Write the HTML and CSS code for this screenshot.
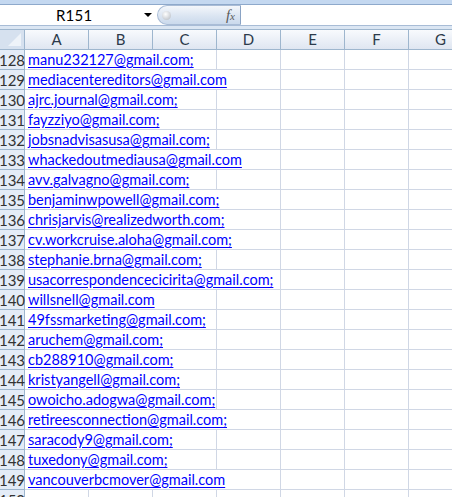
FILE: index.html
```html
<!DOCTYPE html>
<html>
<head>
<meta charset="utf-8">
<link rel="stylesheet" href="styles.css">
</head>
<body>
<div class="app">
  <div class="ribbon-edge"></div>
  <div class="formula-bar">
    <div class="name-box">
      <span class="name-text">R151</span>
      <span class="name-arrow"></span>
    </div>
    <div class="fx-box">
      <span class="knob"></span>
      <span class="fx">f<span class="fx-x">x</span></span>
    </div>
    <div class="formula-input"></div>
  </div>
  <div class="strip"></div>
  <div class="sheet">
    <div class="corner"><span class="corner-tri"></span></div>
    <div class="col-head">A</div>
    <div class="col-head">B</div>
    <div class="col-head">C</div>
    <div class="col-head">D</div>
    <div class="col-head">E</div>
    <div class="col-head">F</div>
    <div class="col-head">G</div>
  </div>
  <div class="rows" id="rows"></div>
</div>
<script>
const data = [
  [128,"manu232127@gmail.com;",3],
  [129,"mediacentereditors@gmail.com",4],
  [130,"ajrc.journal@gmail.com;",3],
  [131,"fayzziyo@gmail.com;",3],
  [132,"jobsnadvisasusa@gmail.com;",3],
  [133,"whackedoutmediausa@gmail.com",4],
  [134,"avv.galvagno@gmail.com;",3],
  [135,"benjaminwpowell@gmail.com;",4],
  [136,"chrisjarvis@realizedworth.com;",4],
  [137,"cv.workcruise.aloha@gmail.com;",4],
  [138,"stephanie.brna@gmail.com;",3],
  [139,"usacorrespondencecicirita@gmail.com;",4],
  [140,"willsnell@gmail.com",3],
  [141,"49fssmarketing@gmail.com;",3],
  [142,"aruchem@gmail.com;",3],
  [143,"cb288910@gmail.com;",3],
  [144,"kristyangell@gmail.com;",3],
  [145,"owoicho.adogwa@gmail.com;",3],
  [146,"retireesconnection@gmail.com;",4],
  [147,"saracody9@gmail.com;",3],
  [148,"tuxedony@gmail.com;",3],
  [149,"vancouverbcmover@gmail.com",4],
  [150,"",1]
];
const rows = document.getElementById('rows');
for (const [n, email, span] of data) {
  const row = document.createElement('div');
  row.className = 'sheet row';
  let html = '<div class="row-head">' + n + '</div>';
  if (email) {
    html += '<div class="cell link-cell span' + span + '"><span class="link">' + email + '</span></div>';
  } else {
    html += '<div class="cell"></div>';
  }
  for (let i = span; i < 7; i++) html += '<div class="cell"></div>';
  row.innerHTML = html;
  rows.appendChild(row);
}
</script>
</body>
</html>
```
FILE: styles.css
```css
html, body {
  margin: 0;
  padding: 0;
  background: #ffffff;
  overflow: hidden;
}
.app {
  width: 452px;
  height: 497px;
  overflow: hidden;
  font-family: Lato, "Open Sans", sans-serif;
}
.ribbon-edge {
  height: 4px;
  background: #c4d8f0;
  border-bottom: 1px solid #8ea9cb;
}
.formula-bar {
  height: 20px;
  display: flex;
  background: #ffffff;
}
.name-box {
  width: 157px;
  display: flex;
  align-items: center;
  position: relative;
}
.name-text {
  font-size: 15px;
  color: #000;
  margin-left: 56px;
  letter-spacing: 0.2px;
}
.name-arrow {
  position: absolute;
  left: 144px;
  top: 8px;
  width: 0;
  height: 0;
  border-left: 4px solid transparent;
  border-right: 4px solid transparent;
  border-top: 4px solid #000;
}
.fx-box {
  width: 84px;
  height: 20px;
  box-sizing: border-box;
  border: 1px solid #a9bcd6;
  border-right: 1px solid #8aa3c4;
  border-radius: 10px 0 0 10px;
  background: linear-gradient(#f4f7fb, #dbe5f2 55%, #cad9ec);
  display: flex;
  align-items: center;
  justify-content: space-between;
  padding: 0 4px 0 4px;
}
.knob {
  width: 9px;
  height: 9px;
  border-radius: 50%;
  background: radial-gradient(circle at 40% 35%, #ffffff, #c8ccd2 70%, #a9adb4);
}
.fx {
  font-family: "Liberation Serif", serif;
  font-style: italic;
  font-size: 15px;
  color: #5a5a5a;
  margin-right: 1px;
}
.fx-x {
  font-size: 11px;
}
.formula-input {
  flex: 1;
  background: #fff;
}
.strip {
  height: 3px;
  background: #dbe6f3;
  border-top: 1px solid #a8bcd6;
}
.sheet {
  display: grid;
  grid-template-columns: 25px repeat(7, 64px);
  width: 473px;
}
.corner {
  height: 21px;
  box-sizing: border-box;
  background: #d6e1ef;
  border-top: 1px solid #9eb6ce;
  border-right: 1px solid #9eb6ce;
  border-bottom: 1px solid #9eb6ce;
  position: relative;
}
.corner-tri {
  position: absolute;
  right: 3px;
  bottom: 3px;
  width: 0;
  height: 0;
  border-left: 13px solid transparent;
  border-bottom: 13px solid #eef3f9;
}
.col-head {
  height: 21px;
  box-sizing: border-box;
  border-top: 1px solid #9eb6ce;
  border-right: 1px solid #9eb6ce;
  border-bottom: 1px solid #9eb6ce;
  background: linear-gradient(#f8fafd, #e9eef6 60%, #dfe6f1);
  font-size: 15px;
  color: #2c3a4a;
  display: flex;
  align-items: center;
  justify-content: center;
  line-height: 1;
}
.row .row-head {
  height: 20px;
  box-sizing: border-box;
  background: #e4ecf7;
  border-right: 1px solid #9eb6ce;
  border-bottom: 1px solid #9eb6ce;
  font-size: 15px;
  color: #333;
  display: flex;
  align-items: flex-end;
  justify-content: center;
  padding-bottom: 1px;
  line-height: 1;
}
.cell {
  height: 20px;
  box-sizing: border-box;
  border-right: 1px solid #d0d7e5;
  border-bottom: 1px solid #d0d7e5;
}
.link-cell {
  display: flex;
  align-items: flex-end;
  padding-left: 3px;
  padding-bottom: 2px;
  white-space: nowrap;
  overflow: visible;
  min-width: 0;
}
.span3 { grid-column: span 3; }
.span4 { grid-column: span 4; }
.link {
  font-size: 14.5px;
  color: #0000ff;
  text-decoration: underline;
  text-underline-offset: 2px;
  line-height: 1;
}
```
